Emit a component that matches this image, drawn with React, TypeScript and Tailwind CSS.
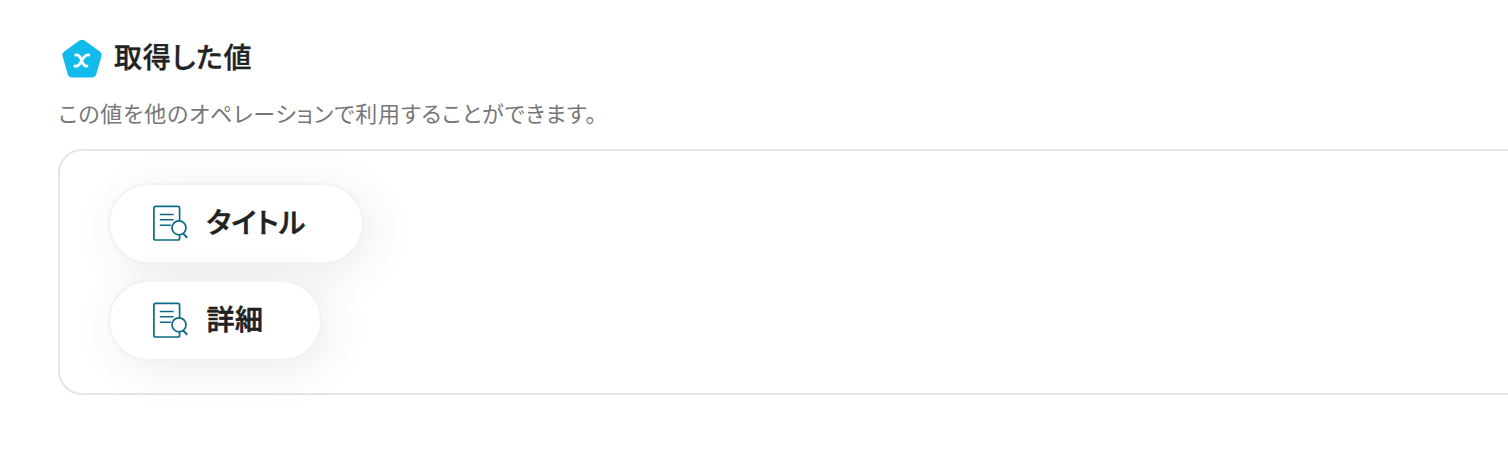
const FONT = "font-['Noto_Sans_CJK_JP','Noto_Sans',sans-serif]";

function PentagonIcon() {
  return (
    <svg width="42" height="42" viewBox="0 0 42 42" fill="none" className="shrink-0">
      <path
        d="M18.4 3.6Q21 1.8 23.6 3.6L38.8 14.6Q41.2 16.4 40.4 19.2L35.4 37Q34.4 40.4 31 40.4H11Q7.6 40.4 6.6 37L1.6 19.2Q.8 16.4 3.2 14.6Z"
        fill="#12bbec"
      />
      <path
        d="M14.8 18C21.8 17 19.2 29.4 26 29.2M27.8 18C20.4 17 21.2 30.4 13.8 29.2"
        stroke="#fff"
        strokeWidth="2.8"
        strokeLinecap="round"
      />
    </svg>
  );
}

function DocumentSearchIcon() {
  return (
    <svg width="36" height="36" viewBox="0 0 36 36" fill="none" stroke="#0c6a87" strokeWidth="1.7" className="shrink-0">
      <path d="M27.6 15.4V3.2Q27.6 1.4 25.8 1.4H3.7Q1.9 1.4 1.9 3.2V33.2Q1.9 35 3.7 35H25.8Q27.6 35 27.6 33.2V30.2" />
      <path d="M7.8 9.4H21.6M7.8 14.8H21.6M7.8 20.2H18.8" strokeWidth="1.5" />
      <circle cx="27" cy="22.8" r="7" />
      <path d="M31 28.4L35.2 32.8" strokeWidth="2" />
    </svg>
  );
}

function ValueChip({ label }: { label: string }) {
  return (
    <div className="flex h-[81px] w-fit items-start gap-[17px] rounded-full border-2 border-[#f2f2f2] bg-white pt-5 pr-14 pl-[42px] shadow-[8px_8px_48px_rgba(0,0,0,0.08)]">
      <DocumentSearchIcon />
      <span className="-mt-1 pl-[1.5px] text-[28px] leading-10 font-medium tracking-[0.6px] text-[#222] [-webkit-text-stroke:0.6px_#222]">
        {label}
      </span>
    </div>
  );
}

export default function App() {
  return (
    <main className={`h-[456px] overflow-hidden bg-white pt-[37px] pl-[58px] [font-feature-settings:'palt'] ${FONT}`} lang="ja">
      <header className="flex h-[42px] items-center gap-[11px] pl-[3px]">
        <PentagonIcon />
        <h1 className="-mt-[5px] text-[28px] leading-[42px] font-medium tracking-[0.8px] text-[#222] [-webkit-text-stroke:0.35px_#222]">
          取得した値
        </h1>
      </header>
      <p className="mt-[17px] pl-[0.5px] text-[22px] leading-8 tracking-[0.8px] text-[#777]">この値を他のオペレーションで利用することができます。</p>
      <section className="mt-[21px] flex h-[246px] w-[1500px] flex-col gap-4 rounded-3xl border-2 border-[#e5e5e5] pt-8 pl-12">
        <ValueChip label="タイトル" />
        <ValueChip label="詳細" />
      </section>
    </main>
  );
}
